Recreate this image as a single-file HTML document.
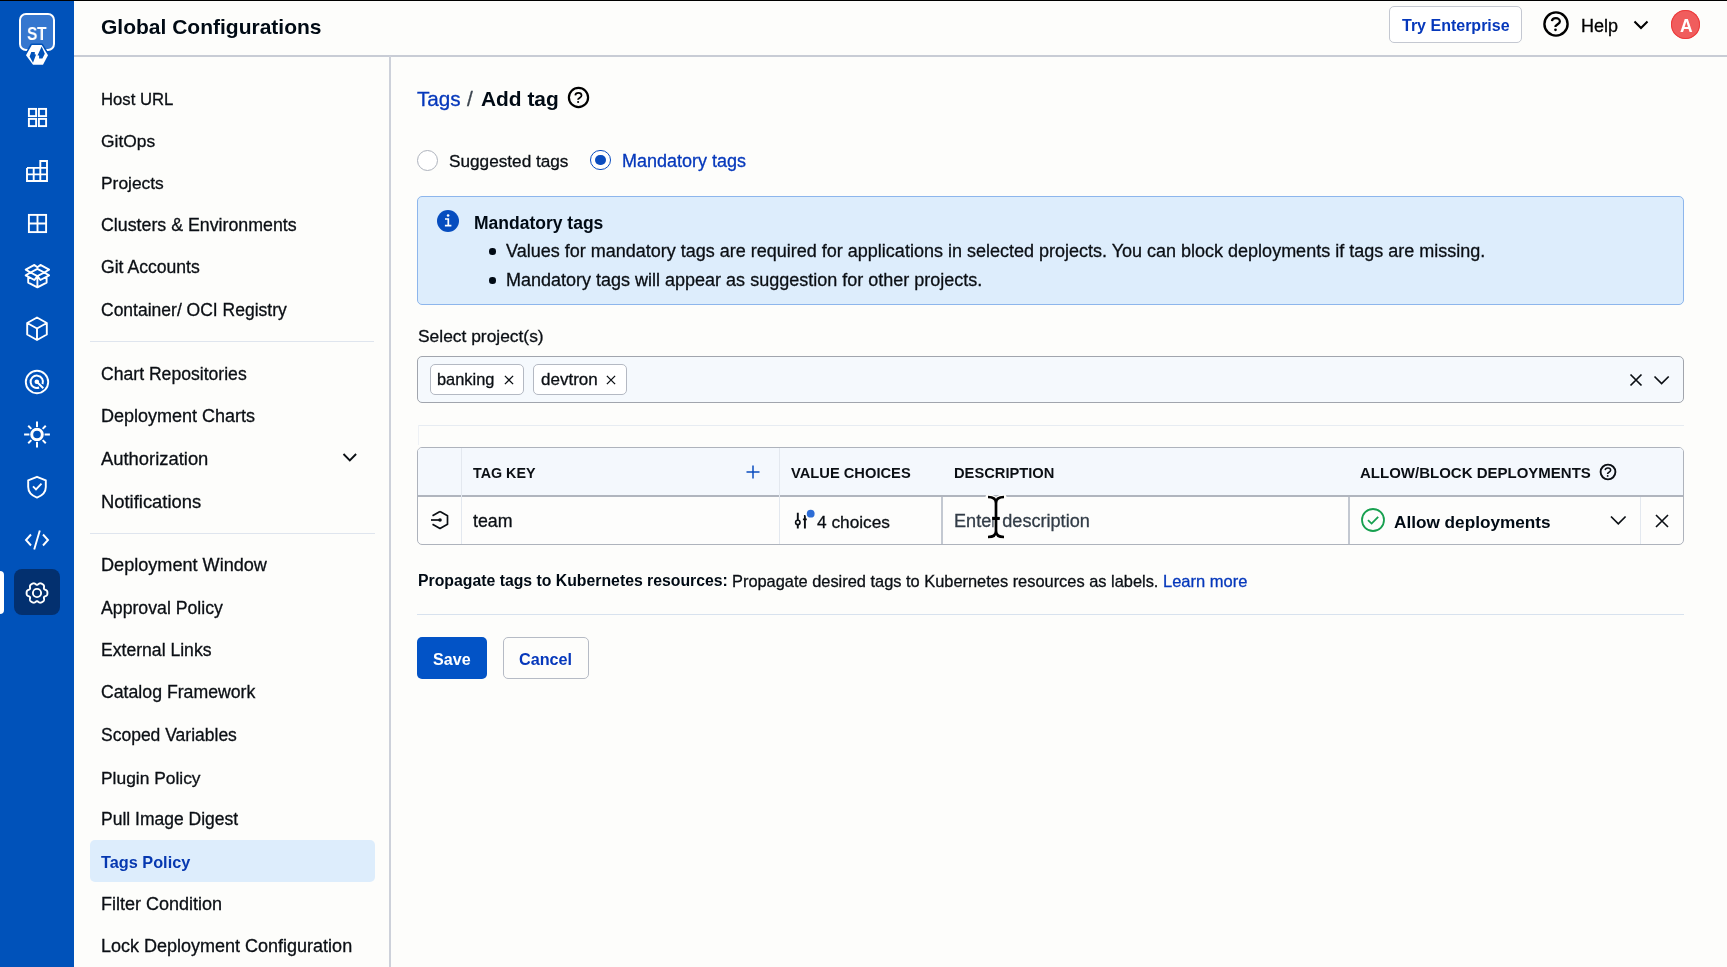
<!DOCTYPE html>
<html><head><meta charset="utf-8"><title>Global Configurations - Tags</title>
<style>
html,body{margin:0;padding:0}
body{width:1727px;height:967px;overflow:hidden;position:relative;background:#fdfdfb;font-family:"Liberation Sans",sans-serif}
.t{position:absolute;will-change:transform;white-space:nowrap;line-height:normal;font-family:"Liberation Sans",sans-serif}
.r{position:absolute;display:block}
</style></head><body>
<div class="r" style="left:0px;top:0px;width:1727px;height:1px;background:#000"></div>
<div class="r" style="left:0px;top:1px;width:74px;height:966px;background:#0052ba"></div>
<div class="r" style="left:19px;top:13px;width:36px;height:38px;border:2px solid #fff;border-radius:7px;background:#3577cf;box-sizing:border-box"></div>
<div class="t" style="left:27.0px;top:22.76px;font-size:18.5px;font-weight:700;color:#fff;transform:scaleX(0.84);transform-origin:0 0;letter-spacing:-0.3px">ST</div>
<svg class="r" style="left:24px;top:43px" width="26" height="25" viewBox="0 0 26 25" fill="none"><path d="M7.8 2.1 L17.7 2.1 L24 12.2 L19 21.8 L9 21.8 L2 12.2 Z" stroke="#0052ba" stroke-width="3.2" stroke-linejoin="round"/><path d="M7.8 2.1 L17.7 2.1 L24 12.2 L19 21.8 L9 21.8 L2 12.2 Z" fill="#fff"/><path d="M7.3 9.1 L10.8 9.1 L10.8 11.6 L12.1 11.6 L9 19.7 L5.6 13.5 Z M17.7 3.5 L20.8 10.8 L18.4 15.6 L15.1 15.6 L15.1 12.5 L13.5 12.5 Z" fill="#0052ba"/></svg>
<svg class="r" style="left:26px;top:106px" width="23" height="23" viewBox="0 0 23 23" fill="none"><rect x="2.9" y="2.9" width="7.2" height="7.2" stroke="#fff" stroke-width="1.9"/><rect x="12.9" y="2.9" width="7.2" height="7.2" stroke="#fff" stroke-width="1.9"/><rect x="2.9" y="12.9" width="7.2" height="7.2" stroke="#fff" stroke-width="1.9"/><rect x="12.9" y="12.9" width="7.2" height="7.2" stroke="#fff" stroke-width="1.9"/></svg>
<svg class="r" style="left:24px;top:158px" width="26" height="25" viewBox="0 0 26 25" fill="none"><path d="M3 9.9 H23 M3 16.4 H23 M9.7 9.9 V23 M16.3 3 V23 M3 9.9 V23 H23 V3 H16.3 V9.9" stroke="#fff" stroke-width="1.9"/></svg>
<svg class="r" style="left:26px;top:211.5px" width="23" height="23" viewBox="0 0 23 23" fill="none"><rect x="2.9" y="2.9" width="17.2" height="17.2" stroke="#fff" stroke-width="1.9"/><path d="M11.5 3 V20 M3 11.5 H20" stroke="#fff" stroke-width="1.9"/></svg>
<svg class="r" style="left:23px;top:262px" width="28" height="28" viewBox="0 0 28 28" fill="none"><path d="M14.4 6.8 L21.3 10.5 L14.4 14.2 L7.5 10.5 Z M7.5 10.5 L2.7 7.6 L11.4 2.9 L14.4 5.2 L17.4 2.9 L26.1 7.6 L21.3 10.5 M7.5 10.5 L2.7 13.4 L11.4 18 L14.4 14.2 L17.4 18 L26.1 13.4 L21.3 10.5 M5.2 14.9 V20.6 L14.4 25.3 L23.6 20.6 V14.9 M14.4 14.2 V25.3" stroke="#fff" stroke-width="1.9" stroke-width="2" stroke-linejoin="round"/></svg>
<svg class="r" style="left:24px;top:315px" width="26" height="28" viewBox="0 0 26 28" fill="none"><path d="M13 2.5 L22.8 8 V19.5 L13 25 L3.2 19.5 V8 Z M3.2 8 L13 13.5 L22.8 8 M13 13.5 V25" stroke="#fff" stroke-width="1.9" stroke-linejoin="round"/></svg>
<svg class="r" style="left:23px;top:368px" width="28" height="28" viewBox="0 0 28 28" fill="none"><circle cx="14" cy="14" r="11.2" stroke="#fff" stroke-width="1.9"/><path d="M16.12 19.55 A6.2 6.2 0 1 1 19.55 16.12" stroke="#fff" stroke-width="2"/><path d="M13.8 13.8 L20.3 20.3" stroke="#fff" stroke-width="2"/><circle cx="13.8" cy="13.8" r="2.3" fill="#fff"/></svg>
<svg class="r" style="left:23px;top:421px" width="28" height="28" viewBox="0 0 28 28" fill="none"><circle cx="14" cy="13.5" r="5.3" stroke="#fff" stroke-width="3"/><path d="M21.60 13.50 L26.90 13.50 M19.66 19.16 L22.77 22.27 M14.00 21.10 L14.00 26.40 M8.34 19.16 L5.23 22.27 M6.40 13.50 L1.10 13.50 M8.34 7.84 L5.23 4.73 M14.00 5.90 L14.00 0.60 M19.66 7.84 L22.77 4.73" stroke="#fff" stroke-width="2"/></svg>
<svg class="r" style="left:25px;top:474px" width="24" height="26" viewBox="0 0 24 26" fill="none"><path d="M12 2.8 L20.8 6.3 V13 C20.8 18 16.8 21.8 12 23.6 C7.2 21.8 3.2 18 3.2 13 V6.3 Z" stroke="#fff" stroke-width="1.9" stroke-linejoin="round"/><path d="M8 12.3 L11 15.3 L16.5 9.6" stroke="#fff" stroke-width="1.9"/></svg>
<svg class="r" style="left:23px;top:528px" width="28" height="24" viewBox="0 0 28 24" fill="none"><path d="M8 6.5 L3 12 L8 17.5 M20 6.5 L25 12 L20 17.5 M16.8 2.5 L11.2 21.5" stroke="#fff" stroke-width="1.9"/></svg>
<div class="r" style="left:14px;top:569px;width:46px;height:46px;background:#03306f;border-radius:8px"></div>
<div class="r" style="left:0px;top:571px;width:4px;height:43px;background:#fff;border-radius:0 4px 4px 0"></div>
<svg class="r" style="left:23px;top:580px" width="28" height="26" viewBox="0 0 28 26" fill="none"><path d="M24.40 13.00 L24.40 13.27 L24.39 13.54 L24.36 13.82 L24.33 14.09 L24.28 14.35 L24.20 14.62 L24.10 14.87 L23.96 15.12 L23.78 15.35 L23.56 15.56 L23.31 15.76 L23.03 15.93 L22.73 16.09 L22.42 16.23 L22.11 16.36 L21.82 16.48 L21.55 16.60 L21.33 16.73 L21.15 16.88 L21.01 17.05 L20.93 17.25 L20.90 17.48 L20.90 17.74 L20.92 18.03 L20.96 18.34 L21.01 18.67 L21.04 19.01 L21.06 19.35 L21.04 19.68 L21.00 20.00 L20.92 20.29 L20.81 20.56 L20.67 20.81 L20.50 21.03 L20.31 21.22 L20.11 21.40 L19.89 21.57 L19.66 21.72 L19.43 21.87 L19.20 22.01 L18.96 22.14 L18.72 22.27 L18.48 22.38 L18.22 22.49 L17.97 22.58 L17.70 22.64 L17.43 22.68 L17.15 22.68 L16.86 22.64 L16.56 22.56 L16.27 22.44 L15.97 22.29 L15.69 22.10 L15.41 21.90 L15.15 21.70 L14.89 21.51 L14.66 21.34 L14.43 21.21 L14.21 21.13 L14.00 21.10 L13.79 21.13 L13.57 21.21 L13.34 21.34 L13.11 21.51 L12.85 21.70 L12.59 21.90 L12.31 22.10 L12.03 22.29 L11.73 22.44 L11.44 22.56 L11.14 22.64 L10.85 22.68 L10.57 22.68 L10.30 22.64 L10.03 22.58 L9.78 22.49 L9.52 22.38 L9.28 22.27 L9.04 22.14 L8.80 22.01 L8.57 21.87 L8.34 21.72 L8.11 21.57 L7.89 21.40 L7.69 21.22 L7.50 21.03 L7.33 20.81 L7.19 20.56 L7.08 20.29 L7.00 20.00 L6.96 19.68 L6.94 19.35 L6.96 19.01 L6.99 18.67 L7.04 18.34 L7.08 18.03 L7.10 17.74 L7.10 17.48 L7.07 17.25 L6.99 17.05 L6.85 16.88 L6.67 16.73 L6.45 16.60 L6.18 16.48 L5.89 16.36 L5.58 16.23 L5.27 16.09 L4.97 15.93 L4.69 15.76 L4.44 15.56 L4.22 15.35 L4.04 15.12 L3.90 14.87 L3.80 14.62 L3.72 14.35 L3.67 14.09 L3.64 13.82 L3.61 13.54 L3.60 13.27 L3.60 13.00 L3.60 12.73 L3.61 12.46 L3.64 12.18 L3.67 11.91 L3.72 11.65 L3.80 11.38 L3.90 11.13 L4.04 10.88 L4.22 10.65 L4.44 10.44 L4.69 10.24 L4.97 10.07 L5.27 9.91 L5.58 9.77 L5.89 9.64 L6.18 9.52 L6.45 9.40 L6.67 9.27 L6.85 9.12 L6.99 8.95 L7.07 8.75 L7.10 8.52 L7.10 8.26 L7.08 7.97 L7.04 7.66 L6.99 7.33 L6.96 6.99 L6.94 6.65 L6.96 6.32 L7.00 6.00 L7.08 5.71 L7.19 5.44 L7.33 5.19 L7.50 4.97 L7.69 4.78 L7.89 4.60 L8.11 4.43 L8.34 4.28 L8.57 4.13 L8.80 3.99 L9.04 3.86 L9.28 3.73 L9.52 3.62 L9.78 3.51 L10.03 3.42 L10.30 3.36 L10.57 3.32 L10.85 3.32 L11.14 3.36 L11.44 3.44 L11.73 3.56 L12.03 3.71 L12.31 3.90 L12.59 4.10 L12.85 4.30 L13.11 4.49 L13.34 4.66 L13.57 4.79 L13.79 4.87 L14.00 4.90 L14.21 4.87 L14.43 4.79 L14.66 4.66 L14.89 4.49 L15.15 4.30 L15.41 4.10 L15.69 3.90 L15.97 3.71 L16.27 3.56 L16.56 3.44 L16.86 3.36 L17.15 3.32 L17.43 3.32 L17.70 3.36 L17.97 3.42 L18.22 3.51 L18.48 3.62 L18.72 3.73 L18.96 3.86 L19.20 3.99 L19.43 4.13 L19.66 4.28 L19.89 4.43 L20.11 4.60 L20.31 4.78 L20.50 4.97 L20.67 5.19 L20.81 5.44 L20.92 5.71 L21.00 6.00 L21.04 6.32 L21.06 6.65 L21.04 6.99 L21.01 7.33 L20.96 7.66 L20.92 7.97 L20.90 8.26 L20.90 8.52 L20.93 8.75 L21.01 8.95 L21.15 9.12 L21.33 9.27 L21.55 9.40 L21.82 9.52 L22.11 9.64 L22.42 9.77 L22.73 9.91 L23.03 10.07 L23.31 10.24 L23.56 10.44 L23.78 10.65 L23.96 10.88 L24.10 11.13 L24.20 11.38 L24.28 11.65 L24.33 11.91 L24.36 12.18 L24.39 12.46 L24.40 12.73 Z" stroke="#fff" stroke-width="1.9" stroke-linejoin="round"/><circle cx="14" cy="13" r="4.1" stroke="#fff" stroke-width="1.9"/></svg>
<div class="t" style="left:101.2px;top:14.70px;font-size:21px;font-weight:700;color:#000a14;">Global Configurations</div>
<div class="r" style="left:74px;top:55px;width:1653px;height:2px;background:#c8ccd5"></div>
<div class="r" style="left:1389px;top:6px;width:133px;height:37px;border:1px solid #c4c8d1;border-radius:5px;box-sizing:border-box;background:#fff"></div>
<div class="t" style="left:1401.9px;top:17.22px;font-size:16px;font-weight:700;color:#0638bb;">Try Enterprise</div>
<svg class="r" style="left:1539.7px;top:8.0px" width="32" height="32" viewBox="0 0 32 32" fill="none"><circle cx="16.0" cy="16.0" r="11.6" stroke="#000" stroke-width="2.4"/><path d="M11.90 13.20 C12.10 11.20 13.90 10.20 15.90 10.20 C18.10 10.20 19.90 11.50 19.90 13.40 C19.90 15.60 16.90 16.20 15.50 18.20 V19.00" stroke="#000" stroke-width="2.20"/><circle cx="15.50" cy="21.80" r="1.35" fill="#000"/></svg>
<div class="t" style="left:1581.1px;top:15.51px;font-size:18px;font-weight:400;color:#000;-webkit-text-stroke:0.3px #000;">Help</div>
<svg class="r" style="left:1632px;top:18px" width="18" height="14" viewBox="0 0 18 14" fill="none"><path d="M2.5 3.5 L9 10 L15.5 3.5" stroke="#000" stroke-width="2.1"/></svg>
<div class="r" style="left:1671px;top:10px;width:29px;height:29px;background:#f05d5d;border-radius:50%;box-shadow:inset 0 0 0 1px #ec3b3b"></div>
<div class="t" style="left:1679.6px;top:15.76px;font-size:17.5px;font-weight:700;color:#fff;">A</div>
<div class="r" style="left:389px;top:56px;width:2px;height:911px;background:#cdd1da"></div>
<div class="r" style="left:90px;top:341px;width:284px;height:1px;background:#dfe5ee"></div>
<div class="r" style="left:90px;top:533px;width:285px;height:1px;background:#dfe5ee"></div>
<div class="r" style="left:90px;top:840px;width:285px;height:42px;background:#ddedfc;border-radius:5px"></div>
<div class="t" style="left:100.8px;top:89.99px;font-size:16.7px;font-weight:400;color:#0b0f14;-webkit-text-stroke:0.3px #0b0f14;">Host URL</div>
<div class="t" style="left:100.8px;top:131.05px;font-size:17.4px;font-weight:400;color:#0b0f14;-webkit-text-stroke:0.3px #0b0f14;">GitOps</div>
<div class="t" style="left:100.8px;top:172.85px;font-size:17.4px;font-weight:400;color:#0b0f14;-webkit-text-stroke:0.3px #0b0f14;">Projects</div>
<div class="t" style="left:100.8px;top:215.09px;font-size:17.8px;font-weight:400;color:#0b0f14;-webkit-text-stroke:0.3px #0b0f14;">Clusters &amp; Environments</div>
<div class="t" style="left:100.8px;top:257.17px;font-size:17.6px;font-weight:400;color:#0b0f14;-webkit-text-stroke:0.3px #0b0f14;">Git Accounts</div>
<div class="t" style="left:100.8px;top:300.26px;font-size:17.5px;font-weight:400;color:#0b0f14;-webkit-text-stroke:0.3px #0b0f14;">Container/ OCI Registry</div>
<div class="t" style="left:100.8px;top:363.67px;font-size:17.6px;font-weight:400;color:#0b0f14;-webkit-text-stroke:0.3px #0b0f14;">Chart Repositories</div>
<div class="t" style="left:100.8px;top:406.21px;font-size:18.0px;font-weight:400;color:#0b0f14;-webkit-text-stroke:0.3px #0b0f14;">Deployment Charts</div>
<div class="t" style="left:100.8px;top:448.45px;font-size:18.4px;font-weight:400;color:#0b0f14;-webkit-text-stroke:0.3px #0b0f14;">Authorization</div>
<div class="t" style="left:100.8px;top:490.65px;font-size:18.4px;font-weight:400;color:#0b0f14;-webkit-text-stroke:0.3px #0b0f14;">Notifications</div>
<div class="t" style="left:100.8px;top:555.22px;font-size:18.1px;font-weight:400;color:#0b0f14;-webkit-text-stroke:0.3px #0b0f14;">Deployment Window</div>
<div class="t" style="left:100.8px;top:597.78px;font-size:17.7px;font-weight:400;color:#0b0f14;-webkit-text-stroke:0.3px #0b0f14;">Approval Policy</div>
<div class="t" style="left:100.8px;top:640.17px;font-size:17.6px;font-weight:400;color:#0b0f14;-webkit-text-stroke:0.3px #0b0f14;">External Links</div>
<div class="t" style="left:100.8px;top:682.28px;font-size:17.7px;font-weight:400;color:#0b0f14;-webkit-text-stroke:0.3px #0b0f14;">Catalog Framework</div>
<div class="t" style="left:100.8px;top:725.26px;font-size:17.5px;font-weight:400;color:#0b0f14;-webkit-text-stroke:0.3px #0b0f14;">Scoped Variables</div>
<div class="t" style="left:100.8px;top:767.75px;font-size:17.4px;font-weight:400;color:#0b0f14;-webkit-text-stroke:0.3px #0b0f14;">Plugin Policy</div>
<div class="t" style="left:100.8px;top:809.46px;font-size:17.5px;font-weight:400;color:#0b0f14;-webkit-text-stroke:0.3px #0b0f14;">Pull Image Digest</div>
<div class="t" style="left:100.8px;top:893.51px;font-size:18.0px;font-weight:400;color:#0b0f14;-webkit-text-stroke:0.3px #0b0f14;">Filter Condition</div>
<div class="t" style="left:100.8px;top:936.01px;font-size:18.0px;font-weight:400;color:#0b0f14;-webkit-text-stroke:0.3px #0b0f14;">Lock Deployment Configuration</div>
<div class="t" style="left:100.8px;top:852.55px;font-size:16.3px;font-weight:700;color:#0638b0;">Tags Policy</div>
<svg class="r" style="left:340px;top:450px" width="20" height="16" viewBox="0 0 20 16" fill="none"><path d="M3.5 4 L9.8 10.3 L16.1 4" stroke="#0b0f14" stroke-width="1.9"/></svg>
<div class="t" style="left:417.2px;top:87.47px;font-size:20.7px;font-weight:400;color:#0638bb;-webkit-text-stroke:0.3px #0638bb;">Tags</div>
<div class="t" style="left:467.0px;top:87.47px;font-size:20.7px;font-weight:400;color:#3c4550;-webkit-text-stroke:0.3px #3c4550;">/</div>
<div class="t" style="left:480.9px;top:87.29px;font-size:20.9px;font-weight:700;color:#000a14;">Add tag</div>
<svg class="r" style="left:565.4px;top:84.0px" width="27" height="27" viewBox="0 0 27 27" fill="none"><circle cx="13.5" cy="13.5" r="9.6" stroke="#000" stroke-width="2.2"/><path d="M10.30 11.32 C10.46 9.76 11.86 8.98 13.42 8.98 C15.14 8.98 16.54 9.99 16.54 11.47 C16.54 13.19 14.20 13.66 13.11 15.22 V15.84" stroke="#000" stroke-width="1.72"/><circle cx="13.11" cy="18.02" r="1.05" fill="#000"/></svg>
<div class="r" style="left:417px;top:149.5px;width:21px;height:21.0px;border:1px solid #aeb3bd;border-radius:50%;box-sizing:border-box;background:#fff"></div>
<div class="t" style="left:448.9px;top:151.23px;font-size:17.2px;font-weight:400;color:#0b0f14;-webkit-text-stroke:0.3px #0b0f14;">Suggested tags</div>
<div class="r" style="left:590.3px;top:149.6px;width:20.800000000000068px;height:20.80000000000001px;border:1.6px solid #0a4cbf;border-radius:50%;box-sizing:border-box;background:#fff"></div>
<div class="r" style="left:595.3px;top:154.6px;width:10.800000000000068px;height:10.800000000000011px;background:#0a4cbf;border-radius:50%"></div>
<div class="t" style="left:622.4px;top:150.51px;font-size:18.0px;font-weight:400;color:#0638bb;-webkit-text-stroke:0.3px #0638bb;">Mandatory tags</div>
<div class="r" style="left:417px;top:196px;width:1267px;height:109px;border:1px solid #8db6ec;border-radius:5px;box-sizing:border-box;background:#ddedfc"></div>
<div class="r" style="left:436.6px;top:210px;width:22.0px;height:22px;background:#064dbf;border-radius:50%"></div>
<svg class="r" style="left:436.6px;top:210px" width="22" height="22" viewBox="0 0 22 22" fill="none"><circle cx="11.1" cy="5.5" r="1.3" fill="#fff"/><path d="M8 9 H11.3 V15.6 M7.9 15.6 H14.4" stroke="#fff" stroke-width="1.7"/></svg>
<div class="t" style="left:474.3px;top:213.16px;font-size:17.5px;font-weight:700;color:#000a14;">Mandatory tags</div>
<div class="r" style="left:489px;top:248.2px;width:6.5px;height:6.5px;background:#000a14;border-radius:50%"></div>
<div class="r" style="left:489px;top:277.1px;width:6.5px;height:6.5px;background:#000a14;border-radius:50%"></div>
<div class="t" style="left:506.2px;top:241.21px;font-size:18.0px;font-weight:400;color:#0b0f14;-webkit-text-stroke:0.3px #0b0f14;">Values for mandatory tags are required for applications in selected projects. You can block deployments if tags are missing.</div>
<div class="t" style="left:506.2px;top:269.71px;font-size:18.0px;font-weight:400;color:#0b0f14;-webkit-text-stroke:0.3px #0b0f14;">Mandatory tags will appear as suggestion for other projects.</div>
<div class="t" style="left:417.6px;top:325.55px;font-size:17.4px;font-weight:400;color:#0b0f14;-webkit-text-stroke:0.3px #0b0f14;">Select project(s)</div>
<div class="r" style="left:417px;top:356px;width:1267px;height:47px;border:1px solid #a1a5ad;border-radius:5px;box-sizing:border-box;background:#f5f9fd"></div>
<div class="r" style="left:429.5px;top:364px;width:94.5px;height:31px;border:1px solid #b4b9c3;border-radius:5px;box-sizing:border-box;background:#fff"></div>
<div class="r" style="left:532.5px;top:364px;width:94.5px;height:31px;border:1px solid #b4b9c3;border-radius:5px;box-sizing:border-box;background:#fff"></div>
<div class="t" style="left:437.4px;top:370.26px;font-size:16.4px;font-weight:400;color:#0b0f14;-webkit-text-stroke:0.3px #0b0f14;">banking</div>
<div class="t" style="left:540.6px;top:369.72px;font-size:17.0px;font-weight:400;color:#0b0f14;-webkit-text-stroke:0.3px #0b0f14;">devtron</div>
<svg class="r" style="left:502px;top:372.5px" width="14" height="14" viewBox="0 0 14 14" fill="none"><path d="M2.9 2.9 L11.1 11.1 M11.1 2.9 L2.9 11.1" stroke="#0b0f14" stroke-width="1.3"/></svg>
<svg class="r" style="left:604px;top:372.5px" width="14" height="14" viewBox="0 0 14 14" fill="none"><path d="M2.9 2.9 L11.1 11.1 M11.1 2.9 L2.9 11.1" stroke="#0b0f14" stroke-width="1.3"/></svg>
<svg class="r" style="left:1627.5px;top:372px" width="16" height="16" viewBox="0 0 16 16" fill="none"><path d="M2.5 2.5 L13.5 13.5 M13.5 2.5 L2.5 13.5" stroke="#0b0f14" stroke-width="1.7"/></svg>
<svg class="r" style="left:1652px;top:372px" width="20" height="16" viewBox="0 0 20 16" fill="none"><path d="M2.5 4.5 L9.6 11.6 L16.7 4.5" stroke="#0b0f14" stroke-width="1.7"/></svg>
<div class="r" style="left:418px;top:424.5px;width:1266px;height:1.0px;background:#e7ecf2"></div>
<div class="r" style="left:418px;top:425px;width:1px;height:20px;background:#eef1f5"></div>
<div class="r" style="left:417px;top:447px;width:1267px;height:98px;border:1px solid #aeb3bc;border-radius:5px;box-sizing:border-box;background:#fdfdfc;overflow:hidden"></div>
<div class="r" style="left:418px;top:448px;width:1265px;height:47px;background:#f4f8fd;border-radius:4px 4px 0 0"></div>
<div class="r" style="left:418px;top:495px;width:1265px;height:2px;background:#b0b5be"></div>
<div class="r" style="left:461px;top:448px;width:1px;height:96px;background:#e3e8ef"></div>
<div class="r" style="left:779px;top:448px;width:1px;height:96px;background:#e3e8ef"></div>
<div class="r" style="left:941px;top:497px;width:2px;height:47px;background:#c3c8d1"></div>
<div class="r" style="left:1348px;top:497px;width:2px;height:47px;background:#c3c8d1"></div>
<div class="r" style="left:1640px;top:497px;width:1px;height:47px;background:#e3e8ef"></div>
<div class="t" style="left:473.0px;top:465.16px;font-size:14.3px;font-weight:700;color:#0b0f14;">TAG KEY</div>
<svg class="r" style="left:745px;top:464px" width="16" height="16" viewBox="0 0 16 16" fill="none"><path d="M8 1.5 V14.5 M1.5 8 H14.5" stroke="#0a4cbf" stroke-width="1.5"/></svg>
<div class="t" style="left:790.9px;top:464.70px;font-size:14.7px;font-weight:700;color:#0b0f14;">VALUE CHOICES</div>
<div class="t" style="left:953.7px;top:464.80px;font-size:14.7px;font-weight:700;color:#0b0f14;">DESCRIPTION</div>
<div class="t" style="left:1360.0px;top:464.43px;font-size:15.0px;font-weight:700;color:#0b0f14;">ALLOW/BLOCK DEPLOYMENTS</div>
<svg class="r" style="left:1596.9px;top:460.5px" width="22" height="22" viewBox="0 0 22 22" fill="none"><circle cx="11.0" cy="11.0" r="7.4" stroke="#0b0f14" stroke-width="1.9"/><path d="M8.21 9.10 C8.35 7.74 9.57 7.06 10.93 7.06 C12.43 7.06 13.65 7.94 13.65 9.23 C13.65 10.73 11.61 11.14 10.66 12.50 V13.04" stroke="#0b0f14" stroke-width="1.50"/><circle cx="10.66" cy="14.94" r="0.92" fill="#0b0f14"/></svg>
<svg class="r" style="left:428.6px;top:509px" width="22" height="22" viewBox="0 0 22 22" fill="none"><path d="M11 2.5 L18.5 6.8 V15.2 L11 19.5 L3.5 15.2 M3.5 6.8 L11 2.5" stroke="#0b0f14" stroke-width="1.7" stroke-linejoin="round"/><path d="M2 11 H11" stroke="#0b0f14" stroke-width="1.7"/><circle cx="11" cy="11" r="1.8" fill="#0b0f14"/></svg>
<div class="t" style="left:473.0px;top:510.89px;font-size:17.8px;font-weight:400;color:#0b0f14;-webkit-text-stroke:0.3px #0b0f14;">team</div>
<svg class="r" style="left:790px;top:506px" width="26" height="26" viewBox="0 0 26 26" fill="none"><path d="M7.8 6.8 V22.6 M14.9 9 V22.6 M12.9 13.4 H16.8" stroke="#0b0f14" stroke-width="1.9"/><circle cx="7.8" cy="16.4" r="2.2" stroke="#0b0f14" stroke-width="1.6" fill="#fdfdfb"/><circle cx="20.7" cy="7.7" r="5.5" fill="#fdfdfb"/><circle cx="20.7" cy="7.7" r="3.9" fill="#2e6dd6"/></svg>
<div class="t" style="left:817.3px;top:511.74px;font-size:17.3px;font-weight:400;color:#0b0f14;-webkit-text-stroke:0.3px #0b0f14;">4 choices</div>
<div class="t" style="left:953.7px;top:511.02px;font-size:18.1px;font-weight:400;color:#323c47;-webkit-text-stroke:0.3px #323c47;">Enter description</div>
<svg class="r" style="left:1359px;top:506px" width="28" height="28" viewBox="0 0 28 28" fill="none"><circle cx="14" cy="14" r="11" stroke="#17a04f" stroke-width="1.8"/><path d="M9 14.2 L12.6 17.6 L19.2 10.8" stroke="#17a04f" stroke-width="1.8"/></svg>
<div class="t" style="left:1394.3px;top:511.73px;font-size:17.2px;font-weight:700;color:#000a14;">Allow deployments</div>
<svg class="r" style="left:1608px;top:512px" width="20" height="16" viewBox="0 0 20 16" fill="none"><path d="M3 4.5 L10.3 11.8 L17.6 4.5" stroke="#0b0f14" stroke-width="1.7"/></svg>
<svg class="r" style="left:1654px;top:513px" width="16" height="16" viewBox="0 0 16 16" fill="none"><path d="M2 2 L14 14 M14 2 L2 14" stroke="#0b0f14" stroke-width="1.6"/></svg>
<svg class="r" style="left:984px;top:493px" width="24" height="49" viewBox="0 0 24 49" fill="none"><path d="M4 4 C8.5 4 12 5.5 12 10 V38 C12 42.5 8.5 44 4 44 M20 4 C15.5 4 12 5.5 12 10 V38 C12 42.5 15.5 44 20 44" stroke="#fdfdfb" stroke-width="5" stroke-linecap="round"/><path d="M4 4 C8.5 4 12 5.5 12 10 V38 C12 42.5 8.5 44 4 44 M20 4 C15.5 4 12 5.5 12 10 V38 C12 42.5 15.5 44 20 44 M8.3 25.4 H15.7" stroke="#000" stroke-width="2.7"/><path d="M8.5 25.4 H15.5" stroke="#000" stroke-width="3"/></svg>
<div class="t" style="left:417.7px;top:572.20px;font-size:15.8px;font-weight:700;color:#000a14;">Propagate tags to Kubernetes resources:</div>
<div class="t" style="left:731.9px;top:571.66px;font-size:16.4px;font-weight:400;color:#0b0f14;-webkit-text-stroke:0.3px #0b0f14;">Propagate desired tags to Kubernetes resources as labels.</div>
<div class="t" style="left:1163.4px;top:571.57px;font-size:16.5px;font-weight:400;color:#0638bb;-webkit-text-stroke:0.3px #0638bb;">Learn more</div>
<div class="r" style="left:417px;top:614px;width:1267px;height:1px;background:#d8e2ee"></div>
<div class="r" style="left:417px;top:637px;width:70px;height:42px;background:#0253c6;border-radius:5px"></div>
<div class="t" style="left:433.3px;top:650.33px;font-size:16.1px;font-weight:700;color:#fff;">Save</div>
<div class="r" style="left:503px;top:637px;width:86px;height:42px;border:1px solid #b6bbc5;border-radius:5px;box-sizing:border-box"></div>
<div class="t" style="left:519.4px;top:650.24px;font-size:16.2px;font-weight:700;color:#0638bb;">Cancel</div>
</body></html>
